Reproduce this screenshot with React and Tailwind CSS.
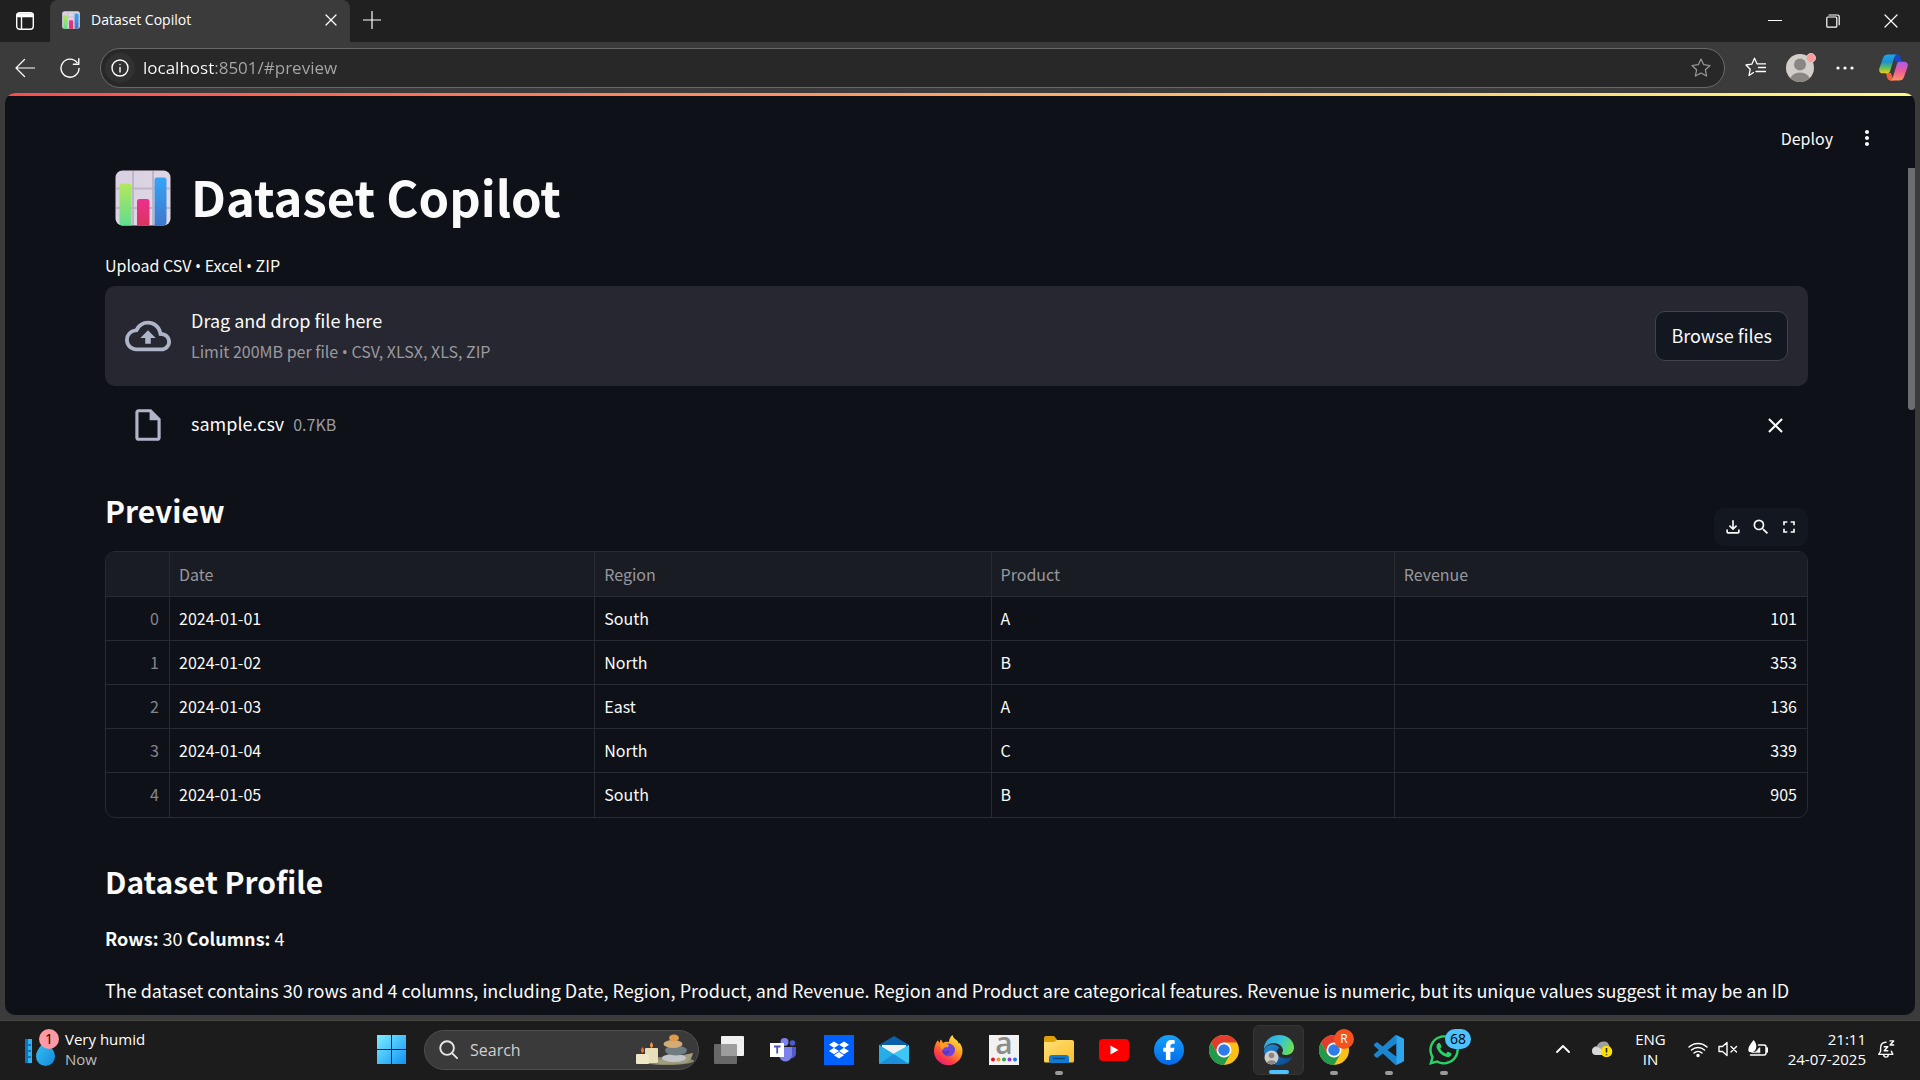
import React from "react";
import { MdOutlineCloudUpload, MdOutlineInsertDriveFile, MdClose, MdOutlineFileDownload, MdSearch, MdFullscreen, MdMoreVert } from "react-icons/md";
import { FaDropbox, FaWhatsapp, FaFacebookF } from "react-icons/fa6";

const source = "font-['Noto_Sans_CJK_SC',sans-serif]";
const segoe = "font-['Open_Sans',sans-serif]";

const rows = [
  ["2024-01-01", "South", "A", 101],
  ["2024-01-02", "North", "B", 353],
  ["2024-01-03", "East", "A", 136],
  ["2024-01-04", "North", "C", 339],
  ["2024-01-05", "South", "B", 905],
];

function ChartEmoji({ className, id }) {
  return (
    <svg viewBox="0 0 56 56" className={className} aria-hidden="true">
      <defs>
        <linearGradient id={id + "bg"} x1="0" y1="0" x2="1" y2="1">
          <stop offset="0" stopColor="#d8cfe0" />
          <stop offset="1" stopColor="#e2dbe8" />
        </linearGradient>
        <linearGradient id={id + "g"} x1="0" y1="0" x2="0" y2="1">
          <stop offset="0" stopColor="#b4e85c" />
          <stop offset="1" stopColor="#5fdc8f" />
        </linearGradient>
        <linearGradient id={id + "r"} x1="0" y1="0" x2="0" y2="1">
          <stop offset="0" stopColor="#ee2f8e" />
          <stop offset="1" stopColor="#d9355f" />
        </linearGradient>
        <linearGradient id={id + "b"} x1="0" y1="0" x2="0" y2="1">
          <stop offset="0" stopColor="#35a5f7" />
          <stop offset="1" stopColor="#3f77cc" />
        </linearGradient>
      </defs>
      <rect x="0.5" y="0.5" width="55" height="55" rx="7" fill={`url(#${id}bg)`} />
      <path d="M18 1v54M38 1v54M1 18.500h54M1 38h54" stroke="#bdb5c8" strokeWidth="2" />
      <path d="M4.500 16a2.500 2.500 0 0 1 2.500-2.500h7a2.500 2.500 0 0 1 2.500 2.500v39.500h-9.500a2.500 2.500 0 0 1-2.500-2.500z" fill={`url(#${id}g)`} />
      <path d="M22 31.500a2.500 2.500 0 0 1 2.500-2.500h7.500a2.500 2.500 0 0 1 2.500 2.500v24H22z" fill={`url(#${id}r)`} />
      <path d="M39.500 10a2.500 2.500 0 0 1 2.500-2.500h7a2.500 2.500 0 0 1 2.500 2.500v42a3.500 3.500 0 0 1-3.500 3.500h-8.500z" fill={`url(#${id}b)`} />
    </svg>
  );
}

function Stroke({ size = 20, className = "", children, width = 1.2, box = 20 }) {
  return (
    <svg width={size} height={size} viewBox={`0 0 ${box} ${box}`} fill="none" stroke="currentColor" strokeWidth={width} strokeLinecap="round" strokeLinejoin="round" className={"shrink-0 " + className} aria-hidden="true">
      {children}
    </svg>
  );
}

function TabStrip() {
  return (
    <div className={`flex h-[42px] shrink-0 bg-[#202020] ${segoe}`}>
      <button aria-label="Tab actions" className="flex w-[50px] items-center justify-center text-white">
        <Stroke size={18} box={18} width={1.4}>
          <rect x="0.700" y="0.700" width="16.600" height="16.600" rx="3" />
          <path d="M1.500 2.500h15M1.500 4h15" strokeWidth="2.500" />
          <path d="M5.500 5v12" />
        </Stroke>
      </button>
      <div className="flex w-[300px] items-center rounded-t-lg bg-[#3b3b3b] pr-[9px] pb-[2px] pl-3">
        <ChartEmoji id="tab" className="h-[18px] w-[18px]" />
        <span className="ml-[11px] grow text-sm text-white">Dataset Copilot</span>
        <button aria-label="Close tab" className="p-1 text-white">
          <Stroke size={12} box={12} width={1.3}><path d="M1 1l10 10M11 1L1 11" /></Stroke>
        </button>
      </div>
      <button aria-label="New tab" className="flex w-11 items-center justify-center pb-[3px] text-white">
        <Stroke size={18} box={18}><path d="M9 0.500v17M0.500 9h17" /></Stroke>
      </button>
      <div className="ml-auto flex text-white">
        <button aria-label="Minimize" className="flex w-[58px] items-center justify-center">
          <Stroke size={14} box={14}><path d="M0.500 6.500h13" /></Stroke>
        </button>
        <button aria-label="Restore" className="flex w-[58px] items-center justify-center">
          <Stroke size={14} box={14}><rect x="0.800" y="3" width="10" height="10.200" rx="1" /><path d="M3 1h8.500a1.700 1.700 0 0 1 1.700 1.700v8" /></Stroke>
        </button>
        <button aria-label="Close" className="flex w-[58px] items-center justify-center">
          <Stroke size={14} box={14}><path d="M1 1l12 12M13 1L1 13" /></Stroke>
        </button>
      </div>
    </div>
  );
}

const star = "M10 1l2.700 5.700 6.300.8-4.600 4.300 1.200 6.200L10 15l-5.600 3 1.200-6.200L1 7.500l6.300-.8z";

function Toolbar() {
  return (
    <div className={`flex h-[51px] shrink-0 items-center bg-[#3b3b3b] text-white ${segoe}`}>
      <button aria-label="Back" className="flex w-[50px] justify-center">
        <Stroke><path d="M19.500 10H1M9.500 1.500L1 10l8.500 8.500" /></Stroke>
      </button>
      <button aria-label="Refresh" className="flex w-10 justify-center">
        <Stroke width={1.4}><path d="M19 10.500A9 9 0 1 1 17 4.500M18.800 0.800v5.400h-5.400" /></Stroke>
      </button>
      <div className="ml-[10px] flex h-10 grow items-center rounded-full border border-[#6a6a6a] bg-[#282828] pr-[13px] pl-1">
        <button aria-label="View site information" className="flex h-[30px] w-[30px] items-center justify-center rounded-full bg-[#313131]">
          <Stroke size={18} box={18} width={1.4}><circle cx="9" cy="9" r="8" /><path d="M9 8.500V13M9 5.500v.1" /></Stroke>
        </button>
        <input
          aria-label="Address"
          readOnly
          defaultValue="localhost:8501/#preview"
          className="ml-2 grow bg-[linear-gradient(90deg,#ffffff_0_72px,#a8a8a8_72px)] bg-clip-text text-[17px] text-transparent outline-none"
        />
        <button aria-label="Add to favorites" className="text-[#9a9a9a]"><Stroke><path d={star} /></Stroke></button>
      </div>
      <button aria-label="Favorites" className="ml-5 text-white">
        <Stroke size={21} box={21} width={1.3}><path d="M8.500 15.500L4 18.500l1.200-6.200L1 8l5.800-.8L9.500 1.200 12 6.800h8.500M13.500 10.500h7M11 14.500h9.500" /></Stroke>
      </button>
      <button aria-label="Profile" className="relative ml-5">
        <svg width="28" height="28" viewBox="0 0 28 28" className="block" aria-hidden="true">
          <clipPath id="av"><circle cx="14" cy="14" r="14" /></clipPath>
          <g clipPath="url(#av)">
            <rect width="28" height="28" fill="#d2cfcb" />
            <circle cx="14" cy="10.500" r="6" fill="#8a8683" />
            <ellipse cx="14" cy="26" rx="10" ry="7.500" fill="#8a8683" />
          </g>
        </svg>
        <span className="absolute -top-px -right-0.5 h-[10px] w-[10px] rounded-full border border-[#d8c8c6] bg-[#ff9c9c]" />
      </button>
      <button aria-label="Settings and more" className="ml-[22px]">
        <svg width="18" height="4" viewBox="0 0 18 4" fill="currentColor" aria-hidden="true"><circle cx="2" cy="2" r="1.600" /><circle cx="9" cy="2" r="1.600" /><circle cx="16" cy="2" r="1.600" /></svg>
      </button>
      <button aria-label="Copilot" className="mr-3 ml-[25px]">
        <svg width="29" height="27" viewBox="0 0 29 27" className="block" aria-hidden="true">
          <defs>
            <linearGradient id="cpa" x1="0" y1="0" x2="0" y2="1"><stop offset="0" stopColor="#19a6ea" /><stop offset=".4" stopColor="#1f8fd0" /><stop offset=".7" stopColor="#5fbf5a" /><stop offset="1" stopColor="#f4cb14" /></linearGradient>
            <linearGradient id="cpb" x1="0" y1="0" x2="0" y2="1"><stop offset="0" stopColor="#a85cf0" /><stop offset=".5" stopColor="#ee5a98" /><stop offset="1" stopColor="#ff9560" /></linearGradient>
          </defs>
          <path d="M15 0.500h3.500c2 0 2.600 1.200 3.200 3.200l1.300 4.300h-5c-1.500 0-2.500-2-3-4z" fill="#1747c4" />
          <path d="M7 19h5l2.500 7.500h-3c-2 0-3-1.500-3.500-3.500z" fill="#f2603a" />
          <path d="M9 0.500h9c-2 .5-2.500 2-3 3.800l-4 13c-.5 1.500-1.500 2-3 2H4c-3 0-4.500-2-3.600-5L4 4C4.800 1.500 6.500.5 9 .5z" fill="url(#cpa)" />
          <path d="M20 26.500h-9c2-.5 2.500-2 3-3.800l4-13c.5-1.500 1.500-2 3-2h4c3 0 4.500 2 3.600 5L25 23c-.8 2.500-2.500 3.500-5 3.500z" fill="url(#cpb)" />
        </svg>
      </button>
    </div>
  );
}

const Dot = () => <span className="font-['Open_Sans']">•</span>;

function Uploader() {
  return (
    <section className="mt-[25px]">
      <label htmlFor="browse" className="block text-base leading-6">Upload CSV <Dot /> Excel <Dot /> ZIP</label>
      <div className="mt-2 flex items-center rounded-[10px] bg-[#262730] px-5 py-[22px]">
        <MdOutlineCloudUpload className="h-[46px] w-[46px] shrink-0 text-[#b0b4c8]" aria-hidden="true" />
        <div className="ml-5 grow">
          <p className="text-lg leading-6">Drag and drop file here</p>
          <p className="mt-[7px] text-base leading-6 text-[#9a9a9f]">Limit 200MB per file <Dot /> CSV, XLSX, XLS, ZIP</p>
        </div>
        <button id="browse" className="h-[50px] rounded-[10px] border border-[#41444c] bg-[#131720] px-[15px] pb-[2px] text-lg">Browse files</button>
      </div>
      <div className="mt-[19px] flex h-10 items-center pr-5 pl-5">
        <MdOutlineInsertDriveFile className="mx-1 h-[38px] w-[38px] text-[#b0b4c8]" aria-hidden="true" />
        <p className="ml-5 flex items-baseline gap-[9px] pb-1">
          <span className="text-lg leading-6">sample.csv</span>
          <span className="text-base leading-6 text-[#9a9a9f]">0.7KB</span>
        </p>
        <button aria-label="Remove file" className="ml-auto"><MdClose className="h-[25px] w-[25px]" /></button>
      </div>
    </section>
  );
}

function DataTable() {
  const line = "border-[#292b32]";
  return (
    <div className={`overflow-hidden rounded-[10px] border ${line}`}>
      <table className="w-full table-fixed border-separate border-spacing-0 text-base leading-6">
        <colgroup>
          <col className="w-16" />
          <col className="w-[25%]" />
          <col className="w-[23.3%]" />
          <col className="w-[23.7%]" />
          <col />
        </colgroup>
        <thead>
          <tr className="h-[45px] bg-[#1a1c24] text-left text-[#97989d]">
            <th aria-label="Index" className={`border-r border-b ${line}`} />
            <th className={`border-r border-b px-[9px] font-normal ${line}`}>Date</th>
            <th className={`border-r border-b px-[9px] font-normal ${line}`}>Region</th>
            <th className={`border-r border-b px-[9px] font-normal ${line}`}>Product</th>
            <th className={`border-b px-[9px] font-normal ${line}`}>Revenue</th>
          </tr>
        </thead>
        <tbody>
          {rows.map((r, i) => {
            const b = i < rows.length - 1 ? "border-b" : "";
            return (
              <tr key={r[0]} className="h-11">
                <td className={`border-r px-[10px] pb-[2px] text-right text-[#85868b] ${b} ${line}`}>{i}</td>
                <td className={`border-r px-[9px] pb-[2px] ${b} ${line}`}>{r[0]}</td>
                <td className={`border-r px-[9px] pb-[2px] ${b} ${line}`}>{r[1]}</td>
                <td className={`border-r px-[9px] pb-[2px] ${b} ${line}`}>{r[2]}</td>
                <td className={`px-[10px] pb-[2px] text-right ${b} ${line}`}>{r[3]}</td>
              </tr>
            );
          })}
        </tbody>
      </table>
    </div>
  );
}

function Page() {
  return (
    <main className={`relative mx-[5px] flex min-h-0 grow flex-col overflow-hidden rounded-[10px] bg-[#0e1117] text-[#fafafa] ${source}`}>
      <div className="h-[3px] shrink-0 bg-[linear-gradient(90deg,#ff4b4b,#fffd80)]" />
      <header className="flex h-[72px] shrink-0 items-end justify-end gap-[22px] pr-9 pb-[18px]">
        <button className="text-base leading-6">Deploy</button>
        <button aria-label="Main menu"><MdMoreVert className="h-6 w-6" /></button>
      </header>
      <div className="pr-[107px] pl-[100px]">
        <h1 className="flex h-[60px] items-center pl-[10px] text-[49px] leading-[60px] font-bold">
          <ChartEmoji id="title" className="mr-5 h-14 w-14" />
          <span className="pb-1">Dataset Copilot</span>
        </h1>
        <Uploader />
        <div className="mt-[38px] flex items-start justify-between">
          <h2 className="text-3xl leading-[54px] font-bold">Preview</h2>
          <div className="mt-[25px] flex h-[38px] items-center gap-2 rounded-[10px] bg-[#131720] px-[9px]">
            <button aria-label="Download"><MdOutlineFileDownload className="h-5 w-5" /></button>
            <button aria-label="Search"><MdSearch className="h-5 w-5" /></button>
            <button aria-label="Fullscreen"><MdFullscreen className="h-5 w-5" /></button>
          </div>
        </div>
        <div className="mt-[5px]"><DataTable /></div>
        <h2 className="mt-9 text-3xl leading-[54px] font-bold">Dataset Profile</h2>
        <p className="mt-[14px] text-lg leading-8"><b>Rows:</b> 30 <b>Columns:</b> 4</p>
        <p className="mt-5 text-lg leading-8">
          The dataset contains 30 rows and 4 columns, including Date, Region, Product, and Revenue. Region and Product are categorical features. Revenue is numeric, but its unique values suggest it may be an ID
        </p>
      </div>
      <div className="absolute top-[75px] right-0 h-[242px] w-[7px] rounded-b-md bg-[#6c6d71]" />
    </main>
  );
}

const Tile = ({ label, active, running, children }) => (
  <button aria-label={label} className={`relative mx-[2px] flex h-[50px] w-[51px] items-center justify-center ${active ? "rounded-md border border-[#353535] bg-[#2b2b2b]" : ""}`}>
    {children}
    {active && <span className="absolute bottom-0 h-1 w-5 rounded-full bg-[#4cc2ff]" />}
    {running && <span className="absolute bottom-0 h-1 w-2 rounded-full bg-[#9a9a9a]" />}
  </button>
);

const Svg = ({ children, w = 30, h = 30 }) => (
  <svg width={w} height={h} viewBox={`0 0 ${w} ${h}`} aria-hidden="true">{children}</svg>
);

const Chrome = () => (
  <Svg>
    <circle cx="15" cy="15" r="15" fill="#fbc116" />
    <path d="M15 0a15 15 0 0 1 13 7.500H15L8.500 18.750 2 7.500A15 15 0 0 1 15 0z" fill="#e33b2e" />
    <path d="M2 7.500L8.500 18.750 15 22.500l6.500-3.750L15 30A15 15 0 0 1 2 7.500z" fill="#229a4b" />
    <circle cx="15" cy="15" r="7.500" fill="#fff" />
    <circle cx="15" cy="15" r="5.800" fill="#2f7bea" />
  </Svg>
);

function Taskbar() {
  return (
    <footer className={`mt-[5px] flex h-[60px] shrink-0 items-center border-t border-[#444] bg-[#1c1c1c] pb-[2px] text-white ${segoe}`}>
      <button className="flex w-[364px] shrink-0 items-center pb-[2px] pl-[25px] text-left text-[15px] leading-5">
        <span className="relative mr-[9px] flex h-10 w-[31px] items-end">
          <Svg w={31} h={40}>
            <defs><linearGradient id="drop" x1="0" y1="0" x2="1" y2="1"><stop offset="0" stopColor="#35c5f2" /><stop offset="1" stopColor="#1787dc" /></linearGradient></defs>
            <rect x="0" y="10" width="7" height="24" fill="#31b4ea" />
            <path d="M0 10h3v24H0z" fill="#1470c0" /><path d="M3 16h3M3 22h3M3 28h3" stroke="#0f5ea8" strokeWidth="1.500" />
            <path d="M20.500 11c3 4 9.500 10 9.500 16.500a9.500 9.500 0 0 1-19 0C11 21 17.500 15 20.500 11z" fill="url(#drop)" />
          </Svg>
          <span className="absolute top-0 left-[14px] flex h-5 w-5 items-center justify-center rounded-full bg-[#ff99a4] text-sm text-black">1</span>
        </span>
        <span><span className="block">Very humid</span><span className="block text-[#bdbdbd]">Now</span></span>
      </button>
      <div className="flex shrink-0 items-center">
        <Tile label="Start">
          <Svg w={29} h={29}>
            <defs><linearGradient id="win" x1="0" y1="0" x2="1" y2="1"><stop offset="0" stopColor="#7deeff" /><stop offset="1" stopColor="#1093f5" /></linearGradient></defs>
            <path d="M0 0h14v14H0zM15 0h14v14H15zM0 15h14v14H0zM15 15h14v14H15z" fill="url(#win)" />
          </Svg>
        </Tile>
        <div className="mr-[2px] ml-[5px] flex h-10 w-[275px] items-center rounded-full border border-[#4f4f4f] bg-[#3a3a3a] pr-1 pl-[14px]">
          <Stroke size={19} width={2} className="text-[#e6e6e6]"><circle cx="8.500" cy="8.500" r="7.200" /><path d="M14 14l5 5" /></Stroke>
          <input aria-label="Search" placeholder="Search" className="ml-3 w-0 grow bg-transparent text-base text-white outline-none placeholder:text-[#cfcfcf]" />
          <Svg w={58} h={32}>
            <ellipse cx="31" cy="27" rx="27" ry="4" fill="#8d8a6d" />
            <path d="M22 26L57 19c-1 5-4 10-10 10.500L22 30z" fill="#a29d80" />
            <rect x="9" y="14" width="13" height="15" rx="1" fill="#eadfbb" />
            <rect x="0" y="20" width="13" height="10" rx="1" fill="#f0e6c8" />
            <path d="M15.500 8c2 2.500 2 5 0 6-2-1-2-3.500 0-6z" fill="#f39a3c" /><path d="M6.500 13c2 2.500 2 5 0 6-2-1-2-3.500 0-6z" fill="#f0722f" />
            <ellipse cx="38" cy="24" rx="12" ry="4" fill="#c3c6c8" />
            <ellipse cx="40" cy="16.500" rx="11" ry="5" fill="#6f7d80" />
            <ellipse cx="37" cy="10" rx="9.500" ry="4" fill="#d2ab77" />
            <ellipse cx="38" cy="4" rx="5" ry="3.500" fill="#e09a4c" />
          </Svg>
        </div>
        <Tile label="Task view">
          <Svg w={30} h={28}><rect x="7" y="0" width="23" height="20" rx="1" fill="#f0f0f0" /><rect x="0" y="8" width="23" height="20" rx="1" fill="#828282" fillOpacity=".75" /></Svg>
        </Tile>
        <Tile label="Teams">
          <svg width="27" height="24" viewBox="0 0 27 24" aria-hidden="true">
            <circle cx="22.500" cy="5" r="2.800" fill="#5059c9" /><path d="M18 9h8v7a5 5 0 0 1-7 4z" fill="#5059c9" />
            <circle cx="14.500" cy="4" r="4" fill="#7b83eb" /><path d="M9 9h13v8a6.500 6.500 0 0 1-13 0z" fill="#7b83eb" />
            <rect x="0" y="5" width="14" height="14" fill="#fff" />
            <path d="M4 8.500h6.500M7.200 8.500v7" stroke="#4b53bc" strokeWidth="1.800" />
          </svg>
        </Tile>
        <Tile label="Dropbox"><span className="flex h-[30px] w-[30px] items-center justify-center bg-[#0061fe]"><FaDropbox className="h-5 w-5" /></span></Tile>
        <Tile label="Mail">
          <Svg w={30} h={28}>
            <path d="M0 9L15 0l15 9v5H0z" fill="#0b5ea8" /><path d="M3 9h24v8L15 20 3 17z" fill="#f1f1f1" />
            <path d="M0 9l30 19H2a2 2 0 0 1-2-2z" fill="#1f9de0" /><path d="M30 9v17a2 2 0 0 1-2 2L14 18z" fill="#3ec6f5" />
            <path d="M0 28L14.500 18 30 28z" fill="#1c8fdc" /><path d="M0 28V9l14.500 9z" fill="#27aee8" />
          </Svg>
        </Tile>
        <Tile label="Firefox">
          <Svg w={29} h={30}>
            <defs><linearGradient id="ff" x1=".8" y1="0" x2=".2" y2="1"><stop offset="0" stopColor="#fff04a" /><stop offset=".4" stopColor="#ff9a20" /><stop offset=".75" stopColor="#ff3a48" /><stop offset="1" stopColor="#e01a80" /></linearGradient></defs>
            <path d="M3.500 5.500c1 0 1.500 1.500 2 2.500l1-3.500c1.500 1 2 2.500 2.500 3.500 1.500-1 3.500-1.500 6-1 0-3 1.500-5.500 3.500-7 .5 3 3 4 5 6l1.500 3 .5-1.500c2 3 3 5.500 3 8.500A14 14 0 0 1 0 16C0 12 1.500 8 3.500 5.500z" fill="url(#ff)" />
            <circle cx="14.500" cy="15" r="6.500" fill="#7142d8" />
            <path d="M6 8c4-.5 7 .5 9 2.500l-1.500 2c-3-.5-4 .5-4.500 2.500-2-2-3.500-4-3-7z" fill="#ff9c24" />
            <path d="M8 16c3 1 5 0 7-1 1 3-2 5-5 4.500z" fill="#5b34b8" />
          </Svg>
        </Tile>
        <Tile label="Amazon">
          <Svg>
            <rect width="30" height="30" fill="#f2f2f2" />
            <text x="15" y="19" textAnchor="middle" fill="#8c8c8c" className="font-['Open_Sans'] text-3xl font-semibold">a</text>
            <circle cx="4" cy="24.500" r="2" fill="#e0102a" /><circle cx="9.500" cy="24.500" r="2" fill="#f39c1f" /><circle cx="15" cy="24.500" r="2" fill="#27a550" /><circle cx="20.500" cy="24.500" r="2" fill="#8a3fd0" /><circle cx="26" cy="24.500" r="2" fill="#1684e0" />
          </Svg>
        </Tile>
        <Tile label="File Explorer" running>
          <Svg w={30} h={27}>
            <defs><linearGradient id="fold" x1="0" y1="0" x2="1" y2="1"><stop offset="0" stopColor="#ffdf78" /><stop offset="1" stopColor="#fbbf2b" /></linearGradient></defs>
            <path d="M0 2a2 2 0 0 1 2-2h8l3 3.500V10H0z" fill="#e0a008" />
            <path d="M0 6h10l3-2h15a2 2 0 0 1 2 2v19a1.500 1.500 0 0 1-1.500 1.500h-27A1.500 1.500 0 0 1 0 25z" fill="url(#fold)" />
            <path d="M5 27v-5a3 3 0 0 1 3-3h14a3 3 0 0 1 3 3v5z" fill="#0f7ad0" /><path d="M9 22.500h12" stroke="#0a4b86" strokeWidth="1.500" />
          </Svg>
        </Tile>
        <Tile label="YouTube"><Svg w={30} h={22}><rect width="30" height="22" rx="4" fill="#f00" /><path d="M11.500 6.500l8 4.500-8 4.500z" fill="#fff" /></Svg></Tile>
        <Tile label="Facebook"><span className="flex h-[30px] w-[30px] items-center justify-center rounded-full bg-linear-to-b from-[#18a0fb] to-[#0a67e8]"><FaFacebookF className="h-5 w-5" /></span></Tile>
        <Tile label="Chrome"><Chrome /></Tile>
        <Tile label="Edge" active>
          <Svg>
            <defs>
              <linearGradient id="ea" x1="0" y1=".3" x2="1" y2=".6"><stop offset="0" stopColor="#2aa5dc" /><stop offset=".5" stopColor="#35c3d8" /><stop offset="1" stopColor="#6fe04a" /></linearGradient>
              <linearGradient id="eb" x1="0" y1="0" x2="1" y2="1"><stop offset="0" stopColor="#1f8fd8" /><stop offset="1" stopColor="#0c3f86" /></linearGradient>
            </defs>
            <path d="M0 14C0 6 7 0 15 0c9 0 15 6 15 12.500 0 5-4 7.500-8.500 7.500-3.500 0-4-1.500-3-3C20.500 13.500 16 8 10 8 5 8 1.500 11 0 14z" fill="url(#ea)" />
            <path d="M0 15C0 23 6 30 15 30c6 0 11-3 13-8-4 2.500-14 2-15-4-.5-2.500 1-4.500 2.500-5C13 8 3 8 0 15z" fill="url(#eb)" />
            <circle cx="7.500" cy="22.500" r="7" fill="#cfcdca" /><circle cx="7.500" cy="20.500" r="2.800" fill="#8a8683" /><path d="M2.800 27.500a5 3.500 0 0 1 9.400 0 7 7 0 0 1-9.400 0z" fill="#8a8683" />
          </Svg>
        </Tile>
        <Tile label="Chrome, profile R" running>
          <Chrome />
          <span className="absolute top-[4px] right-[5px] flex h-5 w-5 items-center justify-center rounded-full bg-[#f4511e] text-xs">R</span>
        </Tile>
        <Tile label="Visual Studio Code" running>
          <svg width="30" height="30" viewBox="0 0 24 24" aria-hidden="true">
            <path d="M23.150 2.587L18.210.21a1.494 1.494 0 0 0-1.705.29l-9.460 8.630-4.120-3.128a.999.999 0 0 0-1.276.057L.327 7.261A1 1 0 0 0 .326 8.740L3.899 12 .326 15.260a1 1 0 0 0 .001 1.479L1.650 17.940a.999.999 0 0 0 1.276.057l4.120-3.128 9.460 8.630a1.492 1.492 0 0 0 1.704.29l4.942-2.377A1.500 1.500 0 0 0 24 20.060V3.939a1.500 1.500 0 0 0-.85-1.352zm-5.146 14.861L10.826 12l7.178-5.448v10.896z" fill="#1a86cf" />
            <path d="M18 .2l5.150 2.387A1.500 1.500 0 0 1 24 3.940v16.120a1.500 1.500 0 0 1-.85 1.352L18 23.800z" fill="#2ea6ee" />
          </svg>
        </Tile>
        <Tile label="WhatsApp" running>
          <FaWhatsapp className="h-[34px] w-[34px] text-[#25d366]" />
          <span className="absolute top-[4px] -right-0.5 flex h-5 w-[26px] items-center justify-center rounded-full bg-[#4cc2ff] text-sm leading-5 text-black">68</span>
        </Tile>
      </div>
      <div className="ml-auto flex shrink-0 items-center pr-[25px] pb-[2px] text-[15px] leading-5">
        <button aria-label="Show hidden icons"><Stroke size={14} box={14} width={1.8}><path d="M1 10l6-6 6 6" /></Stroke></button>
        <button aria-label="OneDrive, attention needed" className="ml-[22px]">
          <Svg w={21} h={18}>
            <path d="M5 15a4.500 4.500 0 0 1 0-9 7 7 0 0 1 11-3l3 6-8 6z" fill="#a0a0a0" /><path d="M4 15a4 4 0 0 1 0-8c3 0 6 2 8 5l-3 3z" fill="#d8d8d8" />
            <circle cx="14.500" cy="11.500" r="5.800" fill="#ffe100" /><path d="M14.500 8v4.500M14.500 14.300v1" stroke="#222" strokeWidth="1.500" />
          </Svg>
        </button>
        <button className="ml-[22px] text-center"><span className="block">ENG</span><span className="block">IN</span></button>
        <button aria-label="Network, sound and battery" className="ml-[22px] flex items-center gap-[10px]">
          <Stroke size={20} width={1.5}><path d="M1 8a13 13 0 0 1 18 0M3.500 11a9.500 9.500 0 0 1 13 0M6 14a6 6 0 0 1 8 0" /><circle cx="10" cy="16.500" r="1" fill="currentColor" /></Stroke>
          <Stroke size={20} width={1.4}><path d="M1 7.500v5h3.500L9 16.500v-13L4.500 7.500zM13 7.500l5.500 5.500M18.500 7.500L13 13" /></Stroke>
          <Stroke size={20} width={1.500}><path d="M10.500 6H16a2 2 0 0 1 2 2v6a2 2 0 0 1-2 2H2.500M19.500 9v4" /><path d="M1 11c0-4 3-6 4.500-9 2.500 3 3 7 .5 9.500-1.500 1.500-5 1.500-5-.5z" fill="currentColor" /><path d="M4 13.500c3 0 5-1 6.500-4l1.500-1v5z" fill="currentColor" strokeWidth=".5" /></Stroke>
        </button>
        <button className="ml-5 text-right"><span className="block">21:11</span><span className="block">24-07-2025</span></button>
        <button aria-label="Notifications" className="ml-[11px]">
          <Stroke size={18} width={1.600}><path d="M10 2.500C5.500 2.500 4 6 4 9v3.500L2 16h15.500L16 12.500M7.500 16.500a2.500 2.500 0 0 0 5 0M8 7.500h4L8 12h4M14.500 1h4l-4 4.500h4" /></Stroke>
        </button>
      </div>
    </footer>
  );
}

export default function App() {
  return (
    <div className="flex h-screen flex-col overflow-hidden bg-[#3b3b3b]">
      <TabStrip />
      <Toolbar />
      <Page />
      <Taskbar />
    </div>
  );
}
